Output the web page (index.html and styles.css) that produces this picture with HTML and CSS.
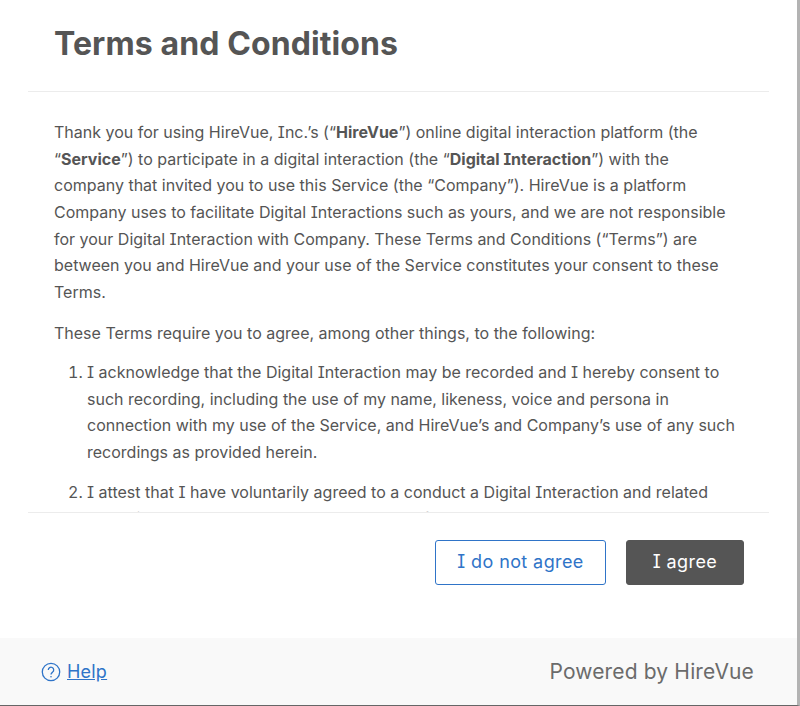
FILE: index.html
```html
<!DOCTYPE html>
<html lang="en">
<head>
<meta charset="utf-8">
<title>Terms and Conditions</title>
<link rel="stylesheet" href="styles.css">
</head>
<body>
<div class="frame">
  <main class="dialog">
    <header class="dialog-header"><h1 class="title">Terms and Conditions</h1></header>
    <section class="dialog-body">
      <p class="para">Thank you for using HireVue, Inc.’s (“<b>HireVue</b>”) online digital interaction platform (the “<b>Service</b>”) to participate in a digital interaction (the “<b>Digital Interaction</b>”) with the company that invited you to use this Service (the “Company”). HireVue is a platform Company uses to facilitate Digital Interactions such as yours, and we are not responsible for your Digital Interaction with Company. These Terms and Conditions (“Terms”) are between you and HireVue and your use of the Service constitutes your consent to these Terms.</p>
      <p class="para para-lead">These Terms require you to agree, among other things, to the following:</p>
      <ol class="list">
        <li class="item">I acknowledge that the Digital Interaction may be recorded and I hereby consent to such recording, including the use of my name, likeness, voice and persona in connection with my use of the Service, and HireVue’s and Company’s use of any such recordings as provided herein.</li>
        <li class="item">I attest that I have voluntarily agreed to a conduct a Digital Interaction and related recording and that I understand the nature of any assessment.</li>
      </ol>
    </section>
    <div class="dialog-actions">
      <button class="btn btn-outline" type="button"><span class="btn-label">I do not agree</span></button>
      <button class="btn btn-solid" type="button"><span class="btn-label">I agree</span></button>
    </div>
  </main>
  <footer class="footer">
    <a class="help" href="#">
      <svg class="help-icon" viewBox="0 0 20 20" width="20" height="20" aria-hidden="true">
        <circle cx="10" cy="10" r="8.7" fill="none" stroke="#2f74c8" stroke-width="1.3"/>
        <path d="M7.3 7.9a2.7 2.7 0 1 1 4.3 2.2c-1 .7-1.6 1.2-1.6 2.4" fill="none" stroke="#2f74c8" stroke-width="1.3"/>
        <circle cx="10" cy="14.8" r=".8" fill="#2f74c8"/>
      </svg>
      <span class="help-text">Help</span>
    </a>
    <span class="powered">Powered by HireVue</span>
  </footer>
</div>
</body>
</html>
```
FILE: styles.css
```css
* { box-sizing: border-box; }
html, body { margin: 0; height: 100%; }
body {
  font-family: Inter, "Liberation Sans", sans-serif;
  font-feature-settings: "cv08" 1;
  color: #555;
  background: #fff;
}
.frame {
  height: 706px;
  display: flex;
  flex-direction: column;
  border-right: 3px solid #b3b3b3;
  border-bottom: 1px solid #666;
}
.dialog {
  flex: 1;
  min-height: 0;
  display: flex;
  flex-direction: column;
  padding: 0 28px;
}
.dialog-header {
  height: 92px;
  padding: 25px 26px 0;
  border-bottom: 1px solid #ececec;
}
.title {
  margin: 0;
  font-size: 32px;
  line-height: 38px;
  font-weight: 700;
  letter-spacing: 0.1px;
  color: #555;
}
.dialog-body {
  height: 420px;
  overflow: hidden;
  padding: 27px 26px 0;
  font-size: 16px;
  line-height: 26.67px;
}
.para { margin: 0 0 14px; }
.para-lead { margin-bottom: 12.5px; }
.list { margin: 0; padding: 0 0 0 33px; }
.item { margin-bottom: 13px; }
.dialog-actions {
  flex: 1;
  border-top: 1px solid #ececec;
  display: flex;
  justify-content: flex-end;
  align-items: flex-start;
  gap: 20px;
  padding: 27px 25px 0 0;
}
.btn {
  height: 45px;
  padding: 0 0 2px;
  border-radius: 3px;
  font-family: inherit;
  font-feature-settings: inherit;
  font-size: 18px;
  letter-spacing: 0.4px;
  cursor: pointer;
}
.btn-outline {
  width: 171px;
  background: #fff;
  border: 1px solid #2f74c8;
  color: #2f74c8;
}
.btn-solid {
  width: 118px;
  background: #555;
  border: 1px solid #555;
  color: #fff;
}
.footer {
  height: 67px;
  flex: none;
  background: #f9f9f9;
  display: flex;
  justify-content: space-between;
  align-items: center;
  padding: 0 43px 0 41px;
}
.help {
  display: flex;
  align-items: center;
  gap: 6px;
  color: #2f74c8;
  font-size: 18px;
  letter-spacing: 0.2px;
}
.help-text { text-decoration: underline; }
.powered { font-size: 21px; letter-spacing: 0.15px; color: #6b6b6b; }
```
